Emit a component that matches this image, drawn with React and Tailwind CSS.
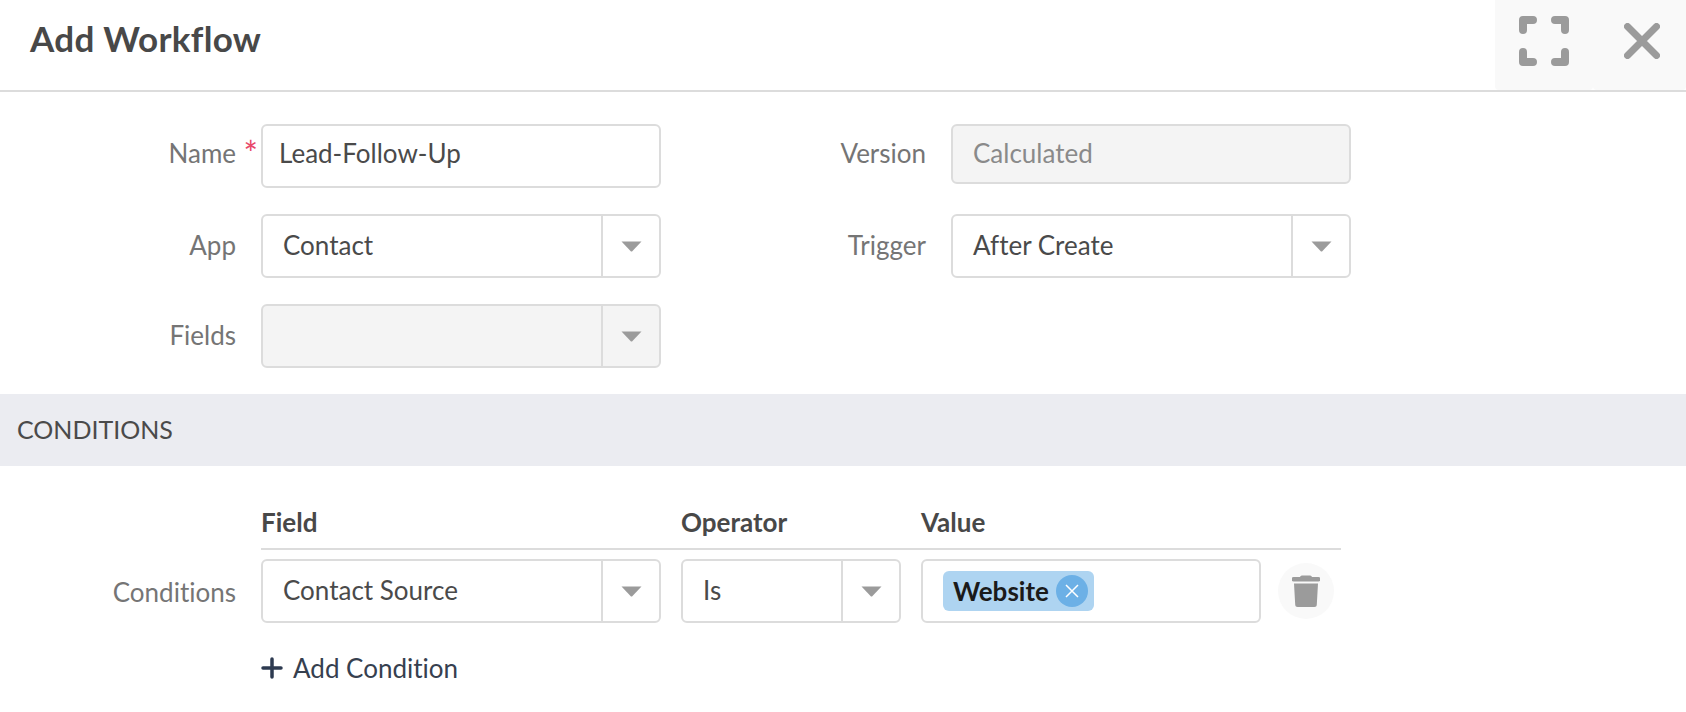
import React from 'react';

const Caret = () => (
    <svg width="21" height="11" viewBox="0 0 21 11" className="block">
        <path d="M0.5 0.5H20.5L11.5 10a1.4 1.4 0 0 1-2 0Z" fill="#9b9b9b" />
    </svg>
);

function Select({ value, width = 'w-[400px]', disabled }) {
    return (
        <div className={`flex h-[64px] ${width} rounded-[6px] border-2 border-[#dcdcdc] ${disabled ? 'bg-[#f4f4f4]' : 'bg-white'}`}>
            <div className="flex flex-1 items-center pb-[2px] pl-[20px] text-[#4a4a4a]">{value}</div>
            <div className="flex w-[58px] items-center justify-center border-l-2 border-[#dcdcdc]">
                <Caret />
            </div>
        </div>
    );
}

function Label({ children, required, height = 'h-[64px]' }) {
    return (
        <div className={`relative flex ${height} w-full items-center justify-end pb-[2px] text-[#757575]`}>
            {children}
            {required && <span className="absolute right-[-22px] top-[12px] text-[34px] leading-[34px] text-[#e8476a]">*</span>}
        </div>
    );
}

export default function App() {
    return (
        <div className="h-[712px] w-[1686px] overflow-hidden bg-white font-['Lato',sans-serif] text-[26px] [font-variant-ligatures:none]">
            <div className="flex h-[92px] border-b-2 border-[#dcdcdc]">
                <h1 className="pl-[30px] pt-[16px] text-[35px] font-bold leading-[45px] tracking-[0.3px] text-[#484848]">Add Workflow</h1>
                <div className="ml-auto flex h-[90px]">
                    <button className="flex w-[98px] items-center justify-center rounded-b-[4px] bg-[#f9f9f9] pb-[8px]">
                        <svg width="50" height="50" viewBox="0 0 50 50" fill="none" stroke="#9b9b9b" strokeWidth="8" strokeLinecap="round" strokeLinejoin="round">
                            <path d="M4 14V4H14" />
                            <path d="M36 4H46V14" />
                            <path d="M4 36V46H14" />
                            <path d="M36 46H46V36" />
                        </svg>
                    </button>
                    <button className="flex w-[93px] items-center justify-center rounded-b-[4px] bg-[#f9f9f9] pb-[8px] pl-[5px]">
                        <svg width="36" height="36" viewBox="0 0 36 36" fill="none" stroke="#9b9b9b" strokeWidth="7" strokeLinecap="round">
                            <path d="M3.5 3.5L32.5 32.5M32.5 3.5L3.5 32.5" />
                        </svg>
                    </button>
                </div>
            </div>

            <div className="grid grid-cols-[236px_425px_265px_425px] grid-rows-[64px_64px_64px] gap-y-[26px] pt-[32px]">
                <Label required height="h-[60px]">Name</Label>
                <div className="ml-[25px] w-[400px]">
                    <div className="flex h-[64px] items-center rounded-[6px] border-2 border-[#dcdcdc] pb-[5px] pl-[16px] text-[#4a4a4a]">Lead-Follow-Up</div>
                </div>
                <Label height="h-[60px]">Version</Label>
                <div className="ml-[25px] w-[400px]">
                    <div className="flex h-[60px] items-center rounded-[6px] border-2 border-[#dcdcdc] bg-[#f4f4f4] pb-[2px] pl-[20px] text-[#8a8a8a]">Calculated</div>
                </div>

                <Label>App</Label>
                <div className="ml-[25px]"><Select value="Contact" /></div>
                <Label>Trigger</Label>
                <div className="ml-[25px]"><Select value="After Create" /></div>

                <Label>Fields</Label>
                <div className="ml-[25px]"><Select value="" disabled /></div>
            </div>

            <div className="mt-[26px] flex h-[72px] items-center bg-[#ebecf1] pl-[17px] text-[25px] text-[#4a4a4a]">CONDITIONS</div>

            <div className="pl-[261px]">
                <div className="flex h-[84px] w-[1080px] items-end border-b-2 border-[#dcdcdc] pb-[6px] text-[26px] font-bold text-[#484848]">
                    <div className="w-[420px]">Field</div>
                    <div className="w-[240px]">Operator</div>
                    <div>Value</div>
                </div>
                <div className="relative mt-[9px] flex h-[64px] items-center">
                    <div className="absolute right-[calc(100%+25px)] whitespace-nowrap pt-[3px] text-[#757575]">Conditions</div>
                    <div className="shrink-0"><Select value="Contact Source" /></div>
                    <div className="ml-[20px] shrink-0"><Select value="Is" width="w-[220px]" /></div>
                    <div className="ml-[20px] flex h-[64px] w-[340px] shrink-0 items-center rounded-[6px] border-2 border-[#dcdcdc] pl-[20px]">
                        <div className="flex h-[40px] w-[151px] items-center rounded-[6px] bg-[#aed4f1] pl-[10px] font-bold text-[#1a1a1a]">
                            Website
                            <span className="ml-auto mr-[6px] flex h-[32px] w-[32px] items-center justify-center rounded-full bg-[#6cb0e6]">
                                <svg width="14" height="14" viewBox="0 0 14 14" fill="none" stroke="#ffffff" strokeWidth="1.5">
                                    <path d="M1 1L13 13M13 1L1 13" />
                                </svg>
                            </span>
                        </div>
                    </div>
                    <button className="ml-[17px] flex h-[56px] w-[56px] shrink-0 items-center justify-center rounded-full bg-[#f9f9f9]">
                        <svg width="28" height="32" viewBox="0 0 28 32" fill="#9b9b9b">
                            <path d="M10 0.5H18a2 2 0 0 1 2 1.5H26.5a1.5 1.5 0 0 1 0 4.5H1.5a1.5 1.5 0 0 1 0-4.5H8a2 2 0 0 1 2-1.5Z" />
                            <path d="M2 8.5H26L24.8 29.5a2.5 2.5 0 0 1-2.5 2.5H5.7a2.5 2.5 0 0 1-2.5-2.5Z" />
                        </svg>
                    </button>
                </div>
                <div className="mt-[30px] flex h-[30px] items-center text-[#36404f]">
                    <svg width="22" height="22" viewBox="0 0 22 22" fill="none" stroke="#2d3a50" strokeWidth="3.5" strokeLinecap="round">
                        <path d="M11 2V20M2 11H20" />
                    </svg>
                    <span className="ml-[10px]">Add Condition</span>
                </div>
            </div>
        </div>
    );
}
